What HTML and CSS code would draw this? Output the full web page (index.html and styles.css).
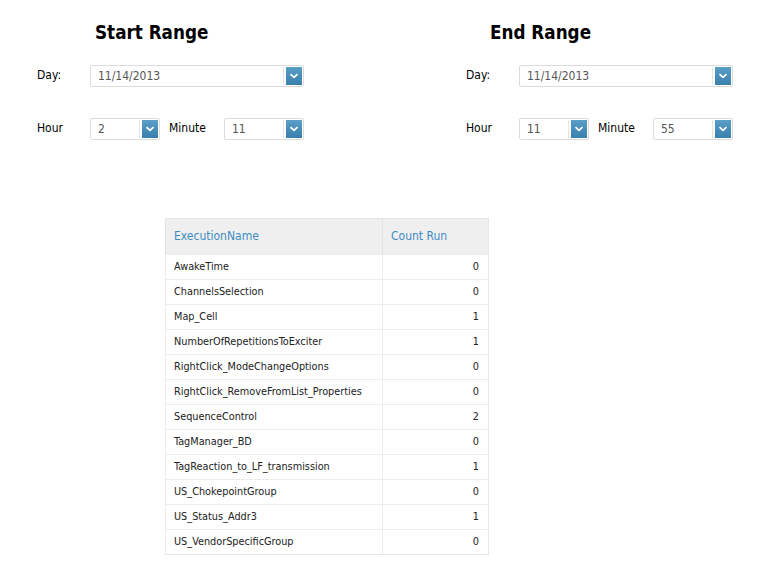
FILE: index.html
```html
<!DOCTYPE html>
<html>
<head>
<meta charset="utf-8">
<link rel="stylesheet" href="styles.css">
</head>
<body>
<div class="ranges">
  <section class="panel">
    <h2 class="title title-start">Start Range</h2>
    <div class="row row-day">
      <span class="lbl">Day:</span>
      <div class="combo combo-day"><span class="val">11/14/2013</span><span class="btn"><svg width="10" height="6" viewBox="0 0 10 6"><path d="M1.5 1.2 L5 4.3 L8.5 1.2" fill="none" stroke="#fff" stroke-width="1.8"/></svg></span></div>
    </div>
    <div class="row row-time">
      <span class="lbl">Hour</span>
      <div class="combo combo-hour"><span class="val">2</span><span class="btn"><svg width="10" height="6" viewBox="0 0 10 6"><path d="M1.5 1.2 L5 4.3 L8.5 1.2" fill="none" stroke="#fff" stroke-width="1.8"/></svg></span></div>
      <span class="lbl lbl-min">Minute</span>
      <div class="combo combo-min"><span class="val">11</span><span class="btn"><svg width="10" height="6" viewBox="0 0 10 6"><path d="M1.5 1.2 L5 4.3 L8.5 1.2" fill="none" stroke="#fff" stroke-width="1.8"/></svg></span></div>
    </div>
  </section>
  <section class="panel">
    <h2 class="title title-end">End Range</h2>
    <div class="row row-day">
      <span class="lbl">Day:</span>
      <div class="combo combo-day"><span class="val">11/14/2013</span><span class="btn"><svg width="10" height="6" viewBox="0 0 10 6"><path d="M1.5 1.2 L5 4.3 L8.5 1.2" fill="none" stroke="#fff" stroke-width="1.8"/></svg></span></div>
    </div>
    <div class="row row-time">
      <span class="lbl">Hour</span>
      <div class="combo combo-hour"><span class="val">11</span><span class="btn"><svg width="10" height="6" viewBox="0 0 10 6"><path d="M1.5 1.2 L5 4.3 L8.5 1.2" fill="none" stroke="#fff" stroke-width="1.8"/></svg></span></div>
      <span class="lbl lbl-min">Minute</span>
      <div class="combo combo-min"><span class="val">55</span><span class="btn"><svg width="10" height="6" viewBox="0 0 10 6"><path d="M1.5 1.2 L5 4.3 L8.5 1.2" fill="none" stroke="#fff" stroke-width="1.8"/></svg></span></div>
    </div>
  </section>
</div>

<table class="grid">
  <thead>
    <tr><th class="c-name">ExecutionName</th><th class="c-count">Count Run</th></tr>
  </thead>
  <tbody>
    <tr><td>AwakeTime</td><td class="num">0</td></tr>
    <tr><td>ChannelsSelection</td><td class="num">0</td></tr>
    <tr><td>Map_Cell</td><td class="num">1</td></tr>
    <tr><td>NumberOfRepetitionsToExciter</td><td class="num">1</td></tr>
    <tr><td>RightClick_ModeChangeOptions</td><td class="num">0</td></tr>
    <tr><td>RightClick_RemoveFromList_Properties</td><td class="num">0</td></tr>
    <tr><td>SequenceControl</td><td class="num">2</td></tr>
    <tr><td>TagManager_BD</td><td class="num">0</td></tr>
    <tr><td>TagReaction_to_LF_transmission</td><td class="num">1</td></tr>
    <tr><td>US_ChokepointGroup</td><td class="num">0</td></tr>
    <tr><td>US_Status_Addr3</td><td class="num">1</td></tr>
    <tr><td>US_VendorSpecificGroup</td><td class="num">0</td></tr>
  </tbody>
</table>
</body>
</html>
```
FILE: styles.css
```css
html, body {
  margin: 0;
  padding: 0;
  background: #fff;
}
body {
  font-family: "DejaVu Sans Condensed", "DejaVu Sans", sans-serif;
  color: #000;
}
.ranges {
  display: flex;
  gap: 162px;
  padding: 20px 0 0 37px;
}
.panel {
  width: 267px;
}
.title {
  margin: 0;
  font-size: 18.7px;
  line-height: 26px;
  font-weight: bold;
  font-family: "DejaVu Sans Condensed", "DejaVu Sans", sans-serif;
}
.title-start { padding-left: 58px; }
.title-end { padding-left: 24px; }
.row {
  display: flex;
  align-items: center;
  height: 22px;
}
.row-day { margin-top: 19px; }
.row-time { margin-top: 31px; }
.lbl {
  width: 53px;
  font-size: 12px;
  line-height: 14px;
  margin-top: -3px;
}
.lbl-min {
  width: 55px;
  margin-left: 9px;
}
.combo {
  box-sizing: border-box;
  height: 22px;
  border: 1px solid #dcdcdc;
  border-radius: 2px;
  display: flex;
  align-items: center;
  justify-content: space-between;
  background: #fff;
}
.combo-day { width: 214px; }
.combo-hour { width: 70px; }
.combo-min { width: 80px; }
.val {
  font-size: 12px;
  color: #555;
  padding-left: 7px;
}
.btn {
  width: 16px;
  height: 18px;
  margin-right: 1px;
  background: linear-gradient(#5a9ec8, #3a80ad);
  display: flex;
  align-items: center;
  justify-content: center;
  box-shadow: -2px 0 0 #fff, -3px 0 0 #e4e4e4;
}
.btn svg { display: block; }
.grid {
  margin: 78px 0 0 165px;
  border-collapse: collapse;
  width: 324px;
  font-size: 10.8px;
  border: 1px solid #e6e6e6;
}
.grid th {
  background: #efefef;
  color: #3d8cc4;
  font-weight: normal;
  font-size: 12px;
  text-align: left;
  height: 33px;
  padding: 0 0 2px 8px;
  border-left: 1px solid #e2e2e2;
}
.grid .c-name { width: 208px; }
.grid td {
  height: 23px;
  padding: 0 0 1px 8px;
  border-top: 1px solid #ececec;
  border-left: 1px solid #ececec;
  color: #222;
}
.grid td.num {
  text-align: right;
  padding: 0 9px 1px 0;
}
```
